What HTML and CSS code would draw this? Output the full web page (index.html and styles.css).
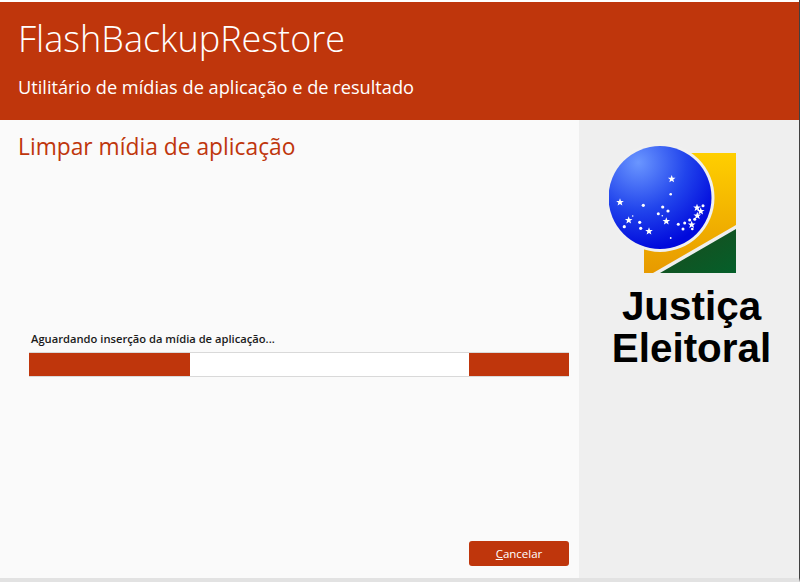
FILE: index.html
```html
<!DOCTYPE html>
<html lang="pt-BR">
<head>
  <meta charset="UTF-8" />
  <title>FlashBackupRestore</title>
  <link rel="stylesheet" href="styles.css">
</head>
<body>
  <div class="window">
    <header class="banner">
      <h1>FlashBackupRestore</h1>
      <p>Utilitário de mídias de aplicação e de resultado</p>
    </header>
    <div class="content">
      <main class="panel">
        <h2>Limpar mídia de aplicação</h2>
        <div class="status">
          <div class="status-label">Aguardando inserção da mídia de aplicação...</div>
          <div class="progress">
            <div class="chunk chunk-left"></div>
            <div class="chunk chunk-right"></div>
          </div>
        </div>
        <div class="actions">
          <button type="button"><u>C</u>ancelar</button>
        </div>
      </main>
      <aside class="side">
        <svg class="emblem" width="128" height="128" viewBox="0 0 128 128">
          <defs>
            <linearGradient id="gold" x1="0" y1="0" x2="0" y2="1">
              <stop offset="0" stop-color="#ffcf00" />
              <stop offset="1" stop-color="#e79a00" />
            </linearGradient>
            <linearGradient id="green" x1="0" y1="0" x2="1" y2="1">
              <stop offset="0" stop-color="#1d4a1c" />
              <stop offset="1" stop-color="#045f2a" />
            </linearGradient>
            <radialGradient id="blue" cx="0.29" cy="0.16" r="0.85">
              <stop offset="0" stop-color="#6a96ff" />
              <stop offset="0.55" stop-color="#2144ec" />
              <stop offset="1" stop-color="#0009dc" />
            </radialGradient>
            <polygon id="star" points="0,-4 1,-1.300 3.800,-1.200 1.600,0.500 2.400,3.200 0,1.700 -2.400,3.200 -1.600,0.500 -3.800,-1.200 -1,-1.300" />
          </defs>
          <path d="M35 7H127V79L44 127H35Z" fill="url(#gold)" />
          <path d="M51 127L127 83V127Z" fill="url(#green)" />
          <circle cx="51" cy="51.500" r="54.500" fill="#f0f0f0" />
          <circle cx="51" cy="51.500" r="51.500" fill="url(#blue)" />
          <g fill="#fff">
            <use href="#star" x="62.700" y="33" />
            <use href="#star" x="11" y="56.300" />
            <use href="#star" x="57.300" y="75.300" />
            <use href="#star" x="19.700" y="74.300" />
            <use href="#star" x="40" y="85.300" />
            <use href="#star" x="82.700" y="78.700" />
            <use href="#star" x="88.300" y="69.700" />
            <use href="#star" x="91.700" y="65.300" />
            <use href="#star" x="88" y="61.700" />
            <circle cx="61.700" cy="48.300" r="1.300" />
            <circle cx="34.300" cy="59.300" r="1.600" />
            <circle cx="53.700" cy="61" r="1.600" />
            <circle cx="59" cy="65" r="1.600" />
            <circle cx="49.300" cy="67.700" r="1.500" />
            <circle cx="53.300" cy="69.700" r="0.800" />
            <circle cx="23.700" cy="70" r="0.800" />
            <circle cx="30.700" cy="76.300" r="1.600" />
            <circle cx="15.300" cy="80.700" r="1.600" />
            <circle cx="31.700" cy="82.300" r="1.600" />
            <circle cx="61.700" cy="92" r="0.900" />
            <circle cx="69.300" cy="78.300" r="1.500" />
            <circle cx="75.700" cy="77" r="1.500" />
            <circle cx="74" cy="83" r="1.500" />
            <circle cx="80.700" cy="74" r="1.500" />
            <circle cx="83.300" cy="83" r="1.300" />
            <circle cx="85.700" cy="73.300" r="1.500" />
            <circle cx="94" cy="59.700" r="1.500" />
          </g>
        </svg>
        <div class="brand">Justiça<br>Eleitoral</div>
      </aside>
    </div>
  </div>
</body>
</html>
```

FILE: styles.css
```css
html, body {
  height: 100%;
}
body {
  margin: 0;
  background: #fff;
  font-family: "Open Sans", "Noto Sans", Arial, sans-serif;
}
.window {
  width: 800px;
  height: 582px;
  box-sizing: border-box;
  padding-top: 2px;
  display: flex;
  flex-direction: column;
  border-right: 1px solid #404040;
  border-bottom: 4px solid #e2e2e2;
  overflow: hidden;
}
.banner {
  height: 118px;
  flex: none;
  box-sizing: border-box;
  padding: 14px 18px 0;
  background: #bf360c;
  color: #fff;
}
.banner h1 {
  margin: 0;
  font-size: 36px;
  font-weight: 300;
  line-height: 46px;
}
.banner p {
  margin: 13px 0 0;
  font-size: 18.200px;
  line-height: 24px;
}
.content {
  flex: 1;
  min-height: 0;
  display: flex;
}
.panel {
  width: 579px;
  box-sizing: border-box;
  padding: 12px 10px 12px 18px;
  background: #fafafa;
  display: flex;
  flex-direction: column;
}
.panel h2 {
  margin: 0;
  color: #bf360c;
  font-size: 22.800px;
  font-weight: 400;
  line-height: 30px;
}
.status {
  margin: 169px 0 0 11px;
}
.status-label {
  padding-left: 2px;
  font-size: 11.200px;
  font-weight: 600;
  line-height: 16px;
  color: #1a1a1a;
}
.progress {
  margin-top: 5px;
  height: 23px;
  display: flex;
  justify-content: space-between;
  background: #fff;
  border-top: 1px solid #d9d9d9;
  border-bottom: 1px solid #d9d9d9;
}
.chunk {
  background: #bf360c;
}
.chunk-left {
  width: 161px;
}
.chunk-right {
  width: 100px;
}
.actions {
  margin-top: auto;
  display: flex;
  justify-content: flex-end;
}
.actions button {
  width: 100px;
  height: 25px;
  padding: 0;
  border: none;
  border-radius: 3px;
  background: #bf360c;
  color: #fff;
  font-family: inherit;
  font-size: 11.500px;
}
.side {
  flex: 1;
  background: #efefef;
  display: flex;
  flex-direction: column;
  align-items: flex-start;
  padding: 26px 0 0 30px;
}
.emblem {
  display: block;
}
.brand {
  width: 165px;
  margin-top: 11px;
  font-family: "Liberation Sans", Arial, sans-serif;
  font-size: 40.400px;
  font-weight: 700;
  line-height: 42px;
  text-align: center;
  color: #000;
}
```
